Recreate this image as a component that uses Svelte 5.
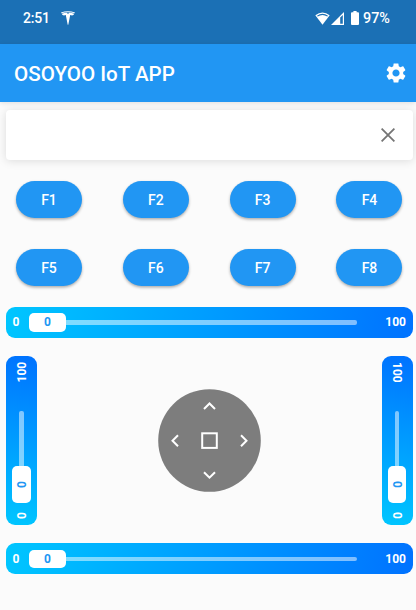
<script>
  const rows = [
    ['F1', 'F2', 'F3', 'F4'],
    ['F5', 'F6', 'F7', 'F8'],
  ];
</script>

{#snippet slider(kind)}
  <div class="slider {kind}">
    <span class="min">0</span>
    <div class="rail">
      <div class="thumb"><span>0</span></div>
      <div class="track"></div>
    </div>
    <span class="max">100</span>
  </div>
{/snippet}

<div class="app">
  <div class="status">
    <span class="time">2:51</span>
    <svg class="tesla" width="14" height="14" viewBox="0 0 14 14" fill="#fff">
      <path d="M0 1.5Q7-1 14 1.5L13.6 2.3Q7 0.2 0.4 2.3Z" />
      <path d="M0.7 2.8Q3.5 1.8 5.8 1.8L7 3L8.2 1.8Q10.5 1.8 13.3 2.8Q12.6 4.4 11 4.5Q10.4 4 9.2 4L7.3 13.8H6.7L4.8 4Q3.6 4 3 4.5Q1.4 4.4 0.7 2.8Z" />
    </svg>
    <span class="grow"></span>
    <svg class="wifi" width="15" height="13" viewBox="0 0 15 13">
      <path d="M0.3 3.2Q7.5-2.4 14.7 3.2L7.5 12.7Z" fill="#fff" />
      <path d="M2 3.7Q7.5-0.1 13 3.7L12.3 4.6Q7.5 1.4 2.7 4.6Z" fill="#1b70b5" />
    </svg>
    <svg class="signal" width="13" height="13" viewBox="0 0 13 13">
      <path d="M0 13L13 0V13Z" fill="#fff" />
      <path d="M9.2 5.5L11.8 2.9V11.8H9.2Z" fill="#1b70b5" />
    </svg>
    <svg class="battery" width="8" height="14" viewBox="0 0 8 14">
      <path d="M2.4 0H5.6V1.3H7Q8 1.3 8 2.3V13Q8 14 7 14H1Q0 14 0 13V2.3Q0 1.3 1 1.3H2.4Z" fill="#fff" />
    </svg>
    <span class="pct">97%</span>
  </div>

  <header>
    <h1>OSOYOO IoT APP</h1>
    <svg width="24" height="24" viewBox="0 0 24 24" fill="#fff">
      <path d="M19.14 12.94c.04-.3.06-.61.06-.94 0-.32-.02-.64-.07-.94l2.03-1.58c.18-.14.23-.41.12-.61l-1.92-3.32c-.12-.22-.37-.29-.59-.22l-2.39.96c-.5-.38-1.03-.7-1.62-.94l-.36-2.54c-.04-.24-.24-.41-.48-.41h-3.84c-.24 0-.43.17-.47.41l-.36 2.54c-.59.24-1.13.57-1.62.94l-2.39-.96c-.22-.08-.47 0-.59.22L2.74 8.87c-.12.21-.08.47.12.61l2.03 1.58c-.05.3-.09.63-.09.94s.02.64.07.94l-2.03 1.58c-.18.14-.23.41-.12.61l1.92 3.32c.12.22.37.29.59.22l2.39-.96c.5.38 1.03.7 1.62.94l.36 2.54c.05.24.24.41.48.41h3.84c.24 0 .44-.17.47-.41l.36-2.54c.59-.24 1.13-.56 1.62-.94l2.39.96c.22.08.47 0 .59-.22l1.92-3.32c.12-.22.07-.47-.12-.61l-2.01-1.58zM12 15.6c-1.98 0-3.6-1.62-3.6-3.6s1.62-3.6 3.6-3.6 3.6 1.62 3.6 3.6-1.62 3.6-3.6 3.6z" />
    </svg>
  </header>

  <main>
    <div class="field">
      <svg width="14" height="14" viewBox="0 0 14 14">
        <path d="M0.6 0.6L13.4 13.4M13.4 0.6L0.6 13.4" stroke="#757575" stroke-width="1.8" />
      </svg>
    </div>

    <div class="grid">
      {#each rows as row}
        <div class="row">
          {#each row as label}
            <button>{label}</button>
          {/each}
        </div>
      {/each}
    </div>

    {@render slider('horizontal')}

    <div class="middle">
      {@render slider('vertical left')}
      <svg class="pad" width="103" height="103" viewBox="0 0 103 103">
        <circle cx="51.5" cy="51.5" r="51.3" fill="#7d7d7d" />
        <g fill="none" stroke="#fff" stroke-width="2">
          <path d="M46 20L51.5 14.5L57 20" />
          <path d="M46 83.2L51.5 88.7L57 83.2" />
          <path d="M20 46.2L14.5 51.7L20 57.2" />
          <path d="M83 46.2L88.5 51.7L83 57.2" />
          <rect x="44.2" y="44.3" width="14.6" height="14.6" />
        </g>
      </svg>
      {@render slider('vertical right')}
    </div>

    {@render slider('horizontal')}
  </main>
</div>

<style>
  :global(body) {
    margin: 0;
    background: #fbfbfb;
  }
  .app {
    width: 416px;
    height: 610px;
    overflow: hidden;
    box-sizing: border-box;
    background: #fbfbfb;
    font-family: Roboto, 'Liberation Sans', sans-serif;
    color: #fff;
  }
  .status {
    display: flex;
    align-items: center;
    height: 44px;
    box-sizing: border-box;
    padding: 0 24.5px 8px 23px;
    background: #1b70b5;
    font-size: 14px;
    font-weight: 500;
  }
  .time {
    width: 38px;
    letter-spacing: -0.2px;
  }
  .grow {
    flex: 1;
  }
  .signal {
    margin-left: 1px;
  }
  .battery {
    margin: 0 4px 0 7px;
  }
  .pct {
    width: 28.5px;
    font-size: 14.4px;
    white-space: nowrap;
  }
  header {
    display: flex;
    align-items: center;
    justify-content: space-between;
    height: 58px;
    box-sizing: border-box;
    padding: 0 8px 0 14px;
    background: #2196f3;
    box-shadow: 0 1px 5px rgba(0, 0, 0, 0.12);
  }
  h1 {
    margin: 0;
    font-size: 20.6px;
    font-weight: 500;
    line-height: 24px;
    padding-top: 1px;
  }
  main {
    padding: 8px 3.5px 0 6px;
  }
  .field {
    display: flex;
    align-items: center;
    justify-content: flex-end;
    height: 49.5px;
    box-sizing: border-box;
    padding-right: 18px;
    background: #fff;
    border-radius: 4px;
    box-shadow: 0 1px 10px rgba(0, 0, 0, 0.13);
  }
  .grid {
    display: flex;
    flex-direction: column;
    gap: 30.5px;
    padding: 21.5px 10px 21.4px;
  }
  .row {
    display: flex;
    justify-content: space-between;
  }
  button {
    width: 66px;
    height: 37px;
    padding: 0;
    border: 0;
    border-radius: 19px;
    background: #2196f3;
    box-shadow: 0 1.5px 3px rgba(0, 0, 0, 0.32);
    color: #fff;
    font: 500 14px/38px Roboto, 'Liberation Sans', sans-serif;
  }
  .slider {
    display: flex;
    align-items: center;
    box-sizing: border-box;
    border-radius: 9px;
    font-size: 12px;
    font-weight: 700;
    line-height: 14px;
  }
  .rail {
    display: flex;
    align-items: center;
    flex: 1;
  }
  .thumb {
    display: flex;
    align-items: center;
    justify-content: center;
    background: #fff;
    border-radius: 5px;
    color: #2196f3;
  }
  .track {
    flex: 1;
    background: rgba(255, 255, 255, 0.5);
  }
  .horizontal {
    height: 31px;
    padding: 0 6.5px;
    background: linear-gradient(100deg, #00c6ff, #0072ff);
  }
  .horizontal .min {
    width: 16.5px;
  }
  .horizontal .thumb {
    width: 37px;
    height: 18.5px;
  }
  .horizontal .track {
    height: 4.5px;
    border-radius: 0 2px 2px 0;
  }
  .horizontal .max {
    width: 49px;
    text-align: right;
  }
  .middle {
    display: flex;
    align-items: center;
    justify-content: space-between;
    padding: 18px 0;
  }
  .vertical {
    flex-direction: column-reverse;
    width: 31px;
    height: 169.5px;
    padding: 6.5px 0;
    background: linear-gradient(10deg, #00c6ff, #0072ff);
  }
  .vertical span {
    writing-mode: vertical-rl;
  }
  .vertical.left span {
    transform: rotate(180deg);
  }
  .vertical .rail {
    flex-direction: column-reverse;
  }
  .vertical .min {
    height: 16px;
    text-align: right;
  }
  .vertical.left .min {
    text-align: left;
  }
  .vertical .thumb {
    width: 18.5px;
    height: 37px;
  }
  .vertical .track {
    width: 4.5px;
    border-radius: 2px 2px 0 0;
  }
  .vertical .max {
    height: 48.5px;
  }
  .vertical.left .max {
    text-align: right;
  }
</style>
